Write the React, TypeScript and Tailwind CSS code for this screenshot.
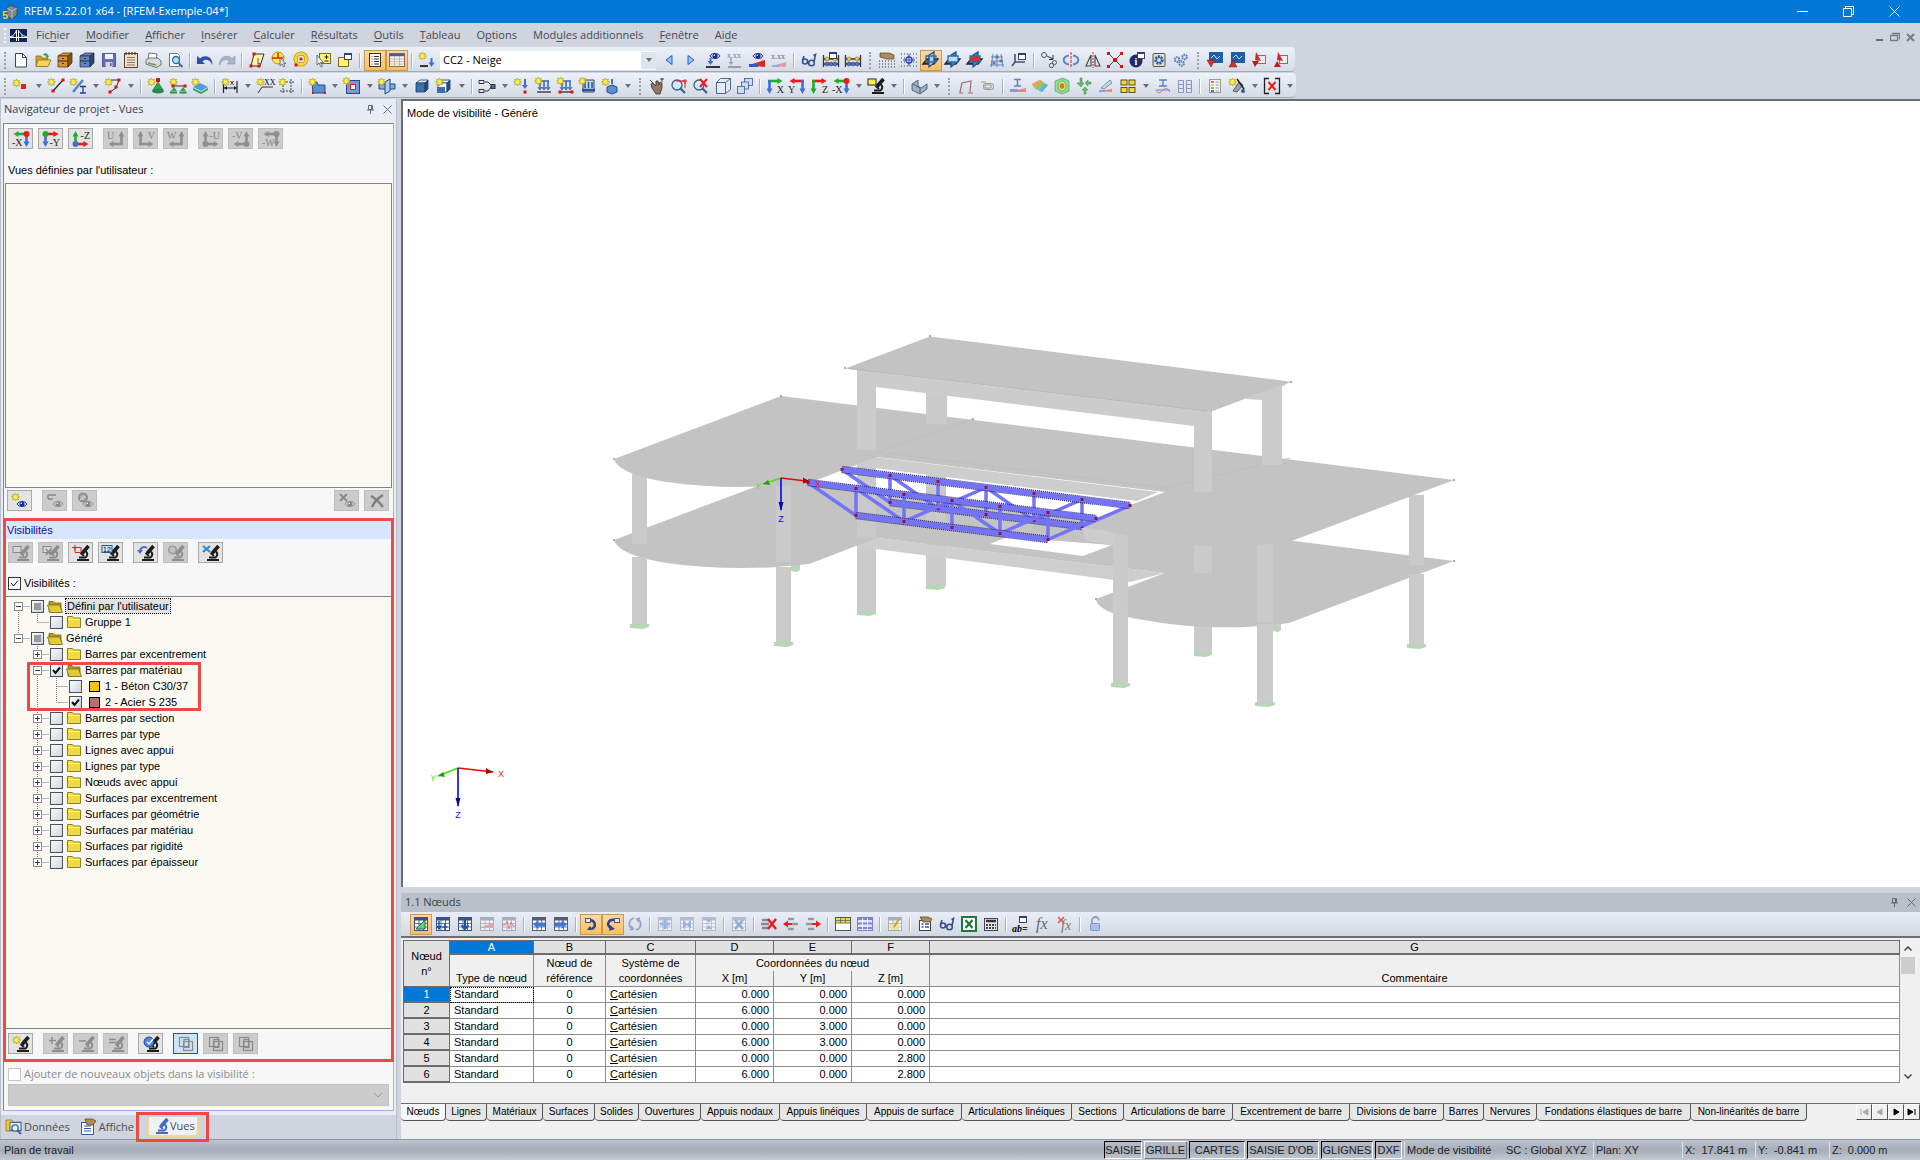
import { useState } from 'react';
import type { ReactNode } from 'react';

/* ---------- small drawing parts shared by the toolbar icons ---------- */

const Star = ({ x = 0, y = 0 }) => (
  <path
    transform={`translate(${x} ${y})`}
    d="M3.5 0l.9 2L6.5 1.2 5.6 3.3 7.5 4 5.6 4.8 6.5 6.8 4.4 6 3.5 8 2.6 6 .5 6.8 1.4 4.8 -.5 4 1.4 3.3.5 1.2 2.6 2z"
    fill="#fff04a"
    stroke="#a3921a"
    strokeWidth=".6"
  />
);

const Dot = ({ x = 0, y = 0, c = '#e01010', s = 3 }) => (
  <rect x={x - s / 2} y={y - s / 2} width={s} height={s} fill={c} />
);

const Scope = ({ c = '#1c1c1c' }) => (
  <g fill="none" stroke={c}>
    <path d="M15.500 1L9 8.500" strokeWidth="3.600" />
    <path d="M7.500 8l3.500 3" strokeWidth="1.800" />
    <path d="M13 6.500c2 2 1.500 5-1 6.500" strokeWidth="2" />
    <path d="M4 15h12M6 12.500h6" strokeWidth="2.200" />
  </g>
);

const Eye = ({ x = 0, y = 0, c = '#1c2a8c' }) => (
  <g transform={`translate(${x} ${y})`}>
    <path d="M0 4C2 .5 8 .5 10 4 8 7.500 2 7.500 0 4z" fill="#c9cfe6" stroke={c} strokeWidth=".9" />
    <circle cx="5" cy="4" r="2.500" fill={c} />
    <circle cx="4.300" cy="3.300" r=".8" fill="#fff" />
  </g>
);

const Window = ({ x = 0, y = 0 }) => (
  <g transform={`translate(${x} ${y})`}>
    <rect x=".5" y=".5" width="7" height="6" fill="#fff" stroke="#444" />
    <path d="M0 1.200h8" stroke="#2b3f86" strokeWidth="1.600" />
  </g>
);

const Sheet = ({ c = '#6c7690' }) => (
  <g>
    <rect x="1.500" y="1.500" width="13" height="13" fill="#fff" stroke={c} />
    <path d="M1 3h14" stroke={c} strokeWidth="3" />
    <path d="M1.500 7.500h13M1.500 11h13M6 3v11.500M10.500 3v11.500" stroke={c} strokeWidth=".8" />
  </g>
);

const Spring = ({ c = '#3d63b5' }) => (
  <g fill="none" stroke={c}>
    <path d="M3 3h10M4 3v8M8 3v8M12 3v8" strokeWidth="1.500" />
    <path d="M2 9l2 3 2-3M6 9l2 3 2-3M10 9l2 3 2-3" />
    <path d="M1 14h14" stroke="#444" strokeWidth="1.500" />
  </g>
);

// Two arrows that leave one corner; the label stands in the opposite one.
const Axes = ({ corner, label, h, v, dot }: { corner: string; label: string; h: string; v: string; dot?: string }) => {
  const right = corner[1] === 'r';
  const bottom = corner[0] === 'b';
  return (
    <g>
      <g transform={`translate(${right ? 17 : -1} ${bottom ? 16 : 0}) scale(${right ? -1 : 1} ${bottom ? -1 : 1})`}>
        <path d="M2 3h10" stroke={h} strokeWidth="2.600" />
        <path d="M11.500 0l5 3-5 3z" fill={h} />
        <path d="M3.500 2v9" stroke={v} strokeWidth="2.600" />
        <path d="M.5 10.500l3 5.500 3-5.500z" fill={v} />
        {dot && <circle cx="3.500" cy="3" r="3" fill={dot} />}
      </g>
      <text
        x={right ? -1 : 17}
        y={bottom ? 8 : 15}
        textAnchor={right ? 'start' : 'end'}
        fontSize="10"
        fontFamily="Liberation Serif, serif"
        fill={h === '#8f8f8f' ? '#858585' : '#222'}
      >
        {label}
      </text>
    </g>
  );
};

const R = '#e81c1c';
const G = '#1fae2c';
const B = '#3f6fd8';
const N = '#8f8f8f';

const Ghost = () => (
  <g fill="none" stroke="#8a8a8a" strokeWidth="1.200">
    <rect x="1.500" y="1.500" width="9" height="9" />
    <rect x="5.500" y="5.500" width="9" height="9" />
    <rect x="6" y="3.500" width="5" height="8" />
  </g>
);

const Glasses = () => (
  <g fill="none" stroke="#34518f" strokeWidth="1.600">
    <circle cx="4" cy="9.500" r="2.500" />
    <circle cx="10.500" cy="11" r="2.800" />
    <path d="M1.500 8.500L3 4M13 10l1.500-7.500-2 1M6.500 9.500l1.500.5" />
  </g>
);

const Abacus = () => (
  <g>
    <path d="M.5 3v12M15.500 3v12M0 7h16M0 12h16" stroke="#333" strokeWidth="1.300" />
    <g fill="#4d76cf" stroke="#1f2f66" strokeWidth=".5">
      <circle cx="4" cy="12" r="2" />
      <circle cx="8" cy="12" r="2" />
      <circle cx="12" cy="12" r="2" />
    </g>
    <circle cx="4" cy="7" r="2" fill="#f0cf3a" stroke="#6d5a10" strokeWidth=".5" />
    <circle cx="12" cy="7" r="2" fill="#f0cf3a" stroke="#6d5a10" strokeWidth=".5" />
  </g>
);

const Planes = ({ a = '#9ed0f5', b = 'none' }) => (
  <g strokeWidth="1.300">
    <path d="M0 12l4-5h11l-4 5z" fill="#d9322d" stroke="#222" />
    <path d="M6 3v12l5-4V0z" fill={a} stroke="#214f92" />
    <path d="M3 4h10v6H3z" fill={b} stroke="#2b6cb3" />
  </g>
);

const Box = ({ c = '#3b6fae' }) => (
  <g stroke="#1f3c66" strokeWidth=".8">
    <path d="M2 5l4-3h8l-3 3z" fill="#e8f1fb" />
    <path d="M2 5h9v9H2z" fill={c} />
    <path d="M11 5l3-3v9l-3 3z" fill="#1f4f86" />
  </g>
);

const Cabinet = ({ c, d }: { c: string; d: string }) => (
  <g stroke="#3a2d12" strokeWidth=".7">
    <path d="M1 4l5-3h9l-4 3z" fill={c} />
    <path d="M1 4h10v11H1z" fill={c} />
    <path d="M11 4l4-3v10l-4 4z" fill={d} />
    <path d="M1 9h10M5 6.500h2M5 11.500h2" fill="none" strokeWidth="1.200" />
  </g>
);

const icons: Record<string, ReactNode> = {
  new: <path d="M2.500 1.500h7l4 4v9.500h-11zM9.500 1.500v4h4" fill="#fff" stroke="#444" />,
  open: (
    <g stroke="#8a6d10" strokeWidth=".8">
      <path d="M1 4h5l1 2h6v8H1z" fill="#c9a227" />
      <path d="M3 8h13l-3 6.500H1z" fill="#f4d55c" />
      <path d="M8 3c2-3 5-2 5 1l1.500-.5-2 2.500-2-2 1.500 0" fill="#2aa32a" stroke="none" />
    </g>
  ),
  blocks: <Cabinet c="#d9932f" d="#8a5412" />,
  blocksBlue: <Cabinet c="#5b83cf" d="#22448c" />,
  save: (
    <g>
      <path d="M1.500 1.500h13v13h-13z" fill="#6b6bb0" stroke="#55558f" />
      <path d="M4 2h8v5H4z" fill="#f3f3f8" />
      <path d="M4.500 10h7v5h-7z" fill="#d4d4e2" />
      <path d="M9 11h1.500v3H9z" fill="#55558f" />
    </g>
  ),
  clipboard: (
    <g>
      <rect x="1.500" y="1.500" width="13" height="14" fill="#efe3cf" stroke="#5e4426" />
      <path d="M4 5.500h8M4 8h8M4 10.500h8M4 13h8" stroke="#8d7757" />
      <path d="M3 0v3M6 0v3M9 0v3M12 0v3" stroke="#5e4426" strokeWidth="1.200" />
    </g>
  ),
  print: (
    <g stroke="#555" strokeWidth=".8">
      <path d="M4 1l8 1-1 6H3z" fill="#fff" />
      <path d="M1 8l3-2h9l3 3v4l-5 2.500L1 12z" fill="#d7dae0" />
      <path d="M3 11l8 2" stroke="#7d9a3a" strokeWidth="1.500" />
    </g>
  ),
  preview: (
    <g>
      <path d="M2.500 1.500h8l2 2v11h-10z" fill="#fff" stroke="#777" />
      <circle cx="9" cy="8" r="3.500" fill="#b5dcf3" stroke="#2f6c99" strokeWidth="1.300" />
      <path d="M11.500 11l4 4" stroke="#2f6c99" strokeWidth="2" />
    </g>
  ),
  undo: <path d="M0 4v8h8L5.500 9.500C8 6.500 13 7 15.500 13 16 5 8 1.500 3 6.500z" fill="#2c4fa8" />,
  redo: <path d="M16 4v8H8l2.500-2.500C8 6.500 3 7 .5 13 0 5 8 1.500 13 6.500z" fill="#a8b4cc" stroke="#7c8aa6" strokeWidth=".5" />,
  cursorRect: (
    <g>
      <path d="M2 14L5 2h10l-4 12z" fill="#fff6a0" stroke="#333" />
      <Dot x={5} y={2} />
      <Dot x={2} y={14} />
      <Dot x={10} y={14} />
      <path d="M9 6v6l1.500-1 1 2" fill="#fff" stroke="#555" />
    </g>
  ),
  cursorCircle: (
    <g>
      <circle cx="7" cy="6" r="6" fill="#ffe55a" stroke="#b08d12" />
      <path d="M7 6H1M7 6V1M7 6h5" stroke={R} strokeWidth="1.500" />
      <path d="M9 6v8l2-2 1.500 3 1.500-1-1.500-2.500h2.500z" fill="#ddd" stroke="#555" strokeWidth=".7" />
    </g>
  ),
  cursorRing: (
    <g>
      <circle cx="8" cy="7" r="5.500" fill="none" stroke="#a07c0c" strokeWidth="4" />
      <circle cx="8" cy="7" r="5.500" fill="none" stroke="#f7d728" strokeWidth="3" />
      <circle cx="8" cy="7" r="2.500" fill="#fff" />
      <Dot x={8} y={7} />
      <Dot x={3} y={13} />
    </g>
  ),
  cursorPlus: (
    <g>
      <rect x="4.500" y="1.500" width="11" height="10" fill="#fff07a" stroke="#776a1b" />
      <path d="M11.500 3v4M9.500 5h4M9.500 9h4" stroke="#222" />
      <path d="M2 3v10l2-2 2 4 1.500-1-2-3.500h3z" fill="#eee" stroke="#444" strokeWidth=".7" />
    </g>
  ),
  yellowWin: (
    <g>
      <path d="M1.500 5.500h10v9h-10z" fill="#fff07a" stroke="#776a1b" />
      <Window x={7} y={1} />
    </g>
  ),
  listPage: (
    <g>
      <rect x="2.500" y="1.500" width="11" height="13" fill="#fff" stroke="#333" />
      <path d="M4.500 4.500h1M4.500 7h1M4.500 9.500h1M4.500 12h1" stroke="#c33" strokeWidth="1.200" />
      <path d="M7 4.500h5M7 7h5M7 9.500h5M7 12h5" stroke="#333" />
    </g>
  ),
  tablePage: (
    <g>
      <rect x=".5" y="1.500" width="15" height="13" fill="#f4f4fb" stroke="#8a6a4a" />
      <path d="M.5 3h15" stroke="#4a5c9c" strokeWidth="2.500" />
      <path d="M5.500 4v10.500M10.500 4v10.500M1 7h14M1 9.500h14M1 12h14" stroke="#b9a48a" strokeWidth=".7" />
    </g>
  ),
  loadCase: (
    <g>
      <Star />
      <path d="M1 14h8" stroke="#333" strokeWidth="2" />
      <path d="M12.500 6v6" stroke={B} strokeWidth="2" />
      <path d="M9.500 10.500h6l-3 4.500z" fill={B} />
    </g>
  ),
  prev: <path d="M11 3.500v9L5 8z" fill="#9cc4f5" stroke="#1f5fc4" />,
  next: <path d="M5 3.500v9L11 8z" fill="#9cc4f5" stroke="#1f5fc4" />,
  eyeLoad: (
    <g>
      <Eye x={5} y={0} />
      <path d="M5.500 6v5" stroke={B} strokeWidth="2" />
      <path d="M2.500 9h6l-3 4z" fill={B} />
      <path d="M1 15h14" stroke="#333" strokeWidth="2" />
    </g>
  ),
  xxLoad: (
    <g>
      <text x="0" y="6" fontSize="8" fontFamily="Liberation Serif, serif" fill="#777">x.xx</text>
      <path d="M4 6v6" stroke="#8da3cf" strokeWidth="1.500" />
      <path d="M1.500 10h5L4 13z" fill="#8da3cf" />
      <path d="M1 15h13" stroke="#888" strokeWidth="1.500" />
    </g>
  ),
  eyeResult: (
    <g>
      <Eye x={4} y={0} />
      <path d="M0 13l16-5v7z" fill="#d92a2a" />
      <path d="M0 12h9v3H0z" fill="#2f57c9" />
    </g>
  ),
  xxResult: (
    <g>
      <text x="0" y="7" fontSize="8" fontFamily="Liberation Serif, serif" fill="#666">x.xx</text>
      <path d="M1 14l14-4v5z" fill="#e69a9a" />
      <path d="M1 13h7v2H1z" fill="#94a6e0" />
    </g>
  ),
  glasses: <Glasses />,
  abacusWin: <g><Abacus /><Window x={6} y={0} /></g>,
  abacus: <Abacus />,
  handGrid: (
    <g>
      <path d="M0 9h16M0 12h16M0 15h16" stroke="#333" strokeDasharray="1 2" />
      <path d="M1 1h9l5 2v4H8L1 5z" fill="#b38a5c" stroke="#553c20" strokeWidth=".7" />
    </g>
  ),
  gridSnap: (
    <g>
      <path d="M0 2h16M0 6h16M0 10h16M0 14h16" stroke="#444" strokeDasharray="1 2" />
      <circle cx="8" cy="8" r="3" fill="#fff" stroke="#2440a8" strokeWidth="1.300" />
      <path d="M8 2v12M2 8h12" stroke="#2440a8" />
    </g>
  ),
  planeA: <Planes a="#9ed0f5" />,
  planeB: <Planes a="#4b86c8" b="#bcdcf6" />,
  planeC: <Planes a="#4b86c8" b="#e62a22" />,
  guides: (
    <g fill="none" stroke="#5b86bb">
      <path d="M4 2L2 15M8 2v13M12 2l2 13M2 5h12M2 9h12M1 13h14" />
      <Dot x={8} y={5} s={2} />
      <Dot x={12} y={9} s={2} />
      <Dot x={5} y={11} s={2} />
    </g>
  ),
  axisWin: (
    <g>
      <path d="M4 2v8l-3 4M4 10h10" stroke="#3c5678" strokeWidth="1.600" fill="none" />
      <Window x={7} y={1} />
    </g>
  ),
  moveCopy: (
    <g fill="none" stroke="#555">
      <circle cx="3" cy="3" r="2.500" />
      <circle cx="10.500" cy="13.500" r="2.200" />
      <circle cx="13.500" cy="10.500" r="2" />
      <path d="M6 4l6 3M12 3v4.500H8" stroke="#333" />
    </g>
  ),
  rotate: (
    <g fill="none">
      <path d="M6 3.500C-1 5-1 11 6 12.500M10 3.500c7 1.500 7 7.500 0 9" stroke="#5a86cc" strokeWidth="2" />
      <path d="M8 0v16" stroke={R} strokeDasharray="3 1" />
    </g>
  ),
  mirror: (
    <g fill="none">
      <path d="M6 3v11H1zM10 3v11h5z" stroke="#444" strokeWidth="1.100" />
      <path d="M8 0v16" stroke={R} strokeDasharray="2 1" />
    </g>
  ),
  cross: (
    <g>
      <path d="M2 2l12 12M14 2L2 14" stroke="#444" />
      <Dot x={1.5} y={1.5} />
      <Dot x={14.5} y={1.5} />
      <Dot x={1.5} y={14.5} />
      <Dot x={14.5} y={14.5} />
      <Dot x={8} y={8} s={4} />
    </g>
  ),
  info: (
    <g>
      <circle cx="7" cy="9" r="6.500" fill="#1f2a6b" />
      <text x="7" y="13" fontSize="10" fontWeight="bold" textAnchor="middle" fontFamily="Liberation Serif, serif" fill="#fff">i</text>
      <Window x={8} y={0} />
    </g>
  ),
  gearBox: (
    <g>
      <rect x="2" y="1.500" width="12" height="13" rx="1" fill="#e3e0cf" stroke="#555" />
      <circle cx="8" cy="8" r="3.500" fill="none" stroke="#2d5aa8" strokeWidth="2.500" strokeDasharray="2 1" />
      <circle cx="8" cy="8" r="2.500" fill="none" stroke="#2d5aa8" />
    </g>
  ),
  gears: (
    <g fill="none" stroke="#5079bf" strokeWidth="2" strokeDasharray="1.500 .7">
      <circle cx="4" cy="7.500" r="2.300" />
      <circle cx="11.500" cy="5" r="2.300" />
      <circle cx="8.500" cy="11.500" r="2.300" />
    </g>
  ),
  modDown: <g><rect x="2" y="0" width="14" height="11" fill="#1f5fa6" /><path d="M4 6l3-3 3 4 3-3" stroke="#bfe0ff" fill="none" /><path d="M0 8h8l-4 7z" fill="#d8322c" stroke="#7d1410" strokeWidth=".5" /></g>,
  modUp: <g><rect x="2" y="0" width="14" height="11" fill="#1f5fa6" /><path d="M4 6l3-3 3 4 3-3" stroke="#bfe0ff" fill="none" /><path d="M0 15h8L4 8z" fill="#d8322c" stroke="#7d1410" strokeWidth=".5" /></g>,
  redDown: <g><rect x="6.500" y="3.500" width="8" height="8" fill="#eee" stroke="#777" /><path d="M5 0l5 9-6-1z" fill={R} /><path d="M1 9h7l-4 6z" fill="#c11818" /></g>,
  redUp: <g><rect x="6.500" y="3.500" width="8" height="8" fill="#eee" stroke="#777" /><path d="M5 0l5 9-6-1z" fill={R} /><path d="M1 15h7L4 9z" fill="#c11818" /></g>,

  node: <g><Star x={0} y={1} /><rect x="8" y="6" width="5" height="5" fill={R} /></g>,
  line: <g><Star /><path d="M5 13L15 2" stroke="#222" strokeWidth="1.200" /><Dot x={15} y={2} /><Dot x={5} y={13} /></g>,
  member: <g><Star /><path d="M3 14L13 2" stroke="#4f86cf" strokeWidth="2.500" /><path d="M10 8.500h6M10 15h6M13 8.500v6.500" stroke="#1f3fa0" strokeWidth="1.300" /></g>,
  polyline: <g><path d="M6 2h8l-3 8-6 4" stroke="#333" fill="none" /><Star x={0} y={0} /><Dot x={14} y={2} /><Dot x={11} y={9} /><Dot x={5} y={14} /></g>,
  support: <g><Star /><Dot x={10} y={2} s={4} /><path d="M10 4l5 8H5z" fill="#2ea84f" stroke="#176b2e" strokeWidth=".7" /><ellipse cx="10" cy="13" rx="6" ry="2.500" fill="#2c8a46" /></g>,
  lineSupport: <g><Star /><path d="M3 8h12" stroke="#333" /><Dot x={3} y={8} /><Dot x={15} y={8} /><path d="M4 9l3 4H1zM13 9l3 4h-6z" fill="#2ea84f" /><path d="M0 14.500h7M9.500 14.500h7" stroke="#2c8a46" strokeWidth="2" /></g>,
  surfSupport: <g><path d="M1 9l7-4 8 4-7 4z" fill="#4f9be0" /><path d="M1 10l8 4 7-4v2l-7 4-8-4z" fill="#2ea84f" /><Star x={0} y={0} /></g>,
  dim: <g><path d="M1.500 3v12M15 3v12M2 10h12" stroke="#222" strokeWidth="1.200" /><path d="M2 10l3-2v4zM15 10l-3-2v4z" fill="#222" /><text x="8" y="7" fontSize="8" fontFamily="Liberation Sans, sans-serif">x</text><Star x={0} y={0} /></g>,
  comment: <g><path d="M1 15l4-6h11" stroke="#333" fill="none" /><text x="7" y="7" fontSize="8" fontFamily="Liberation Serif, serif">XX</text><Star /></g>,
  guideFrame: <g><path d="M4 1v15M12 1v15M1 4h15M1 13h15" stroke="#444" strokeDasharray="2 1" /><Star /></g>,
  surface: <g><path d="M3 5l5-1 1 3h7v8H4z" fill="#5a8fd0" stroke="#224b86" /><Star /><Dot x={4} y={15} s={2} /><Dot x={16} y={15} s={2} /></g>,
  opening: <g><rect x="2.500" y="2.500" width="13" height="13" fill="#6f9fd6" stroke="#224b86" /><rect x="6.500" y="6.500" width="5" height="5" fill="#fff" stroke={R} /><Star x={-1} y={-1} /></g>,
  intersect: <g><path d="M0 6h16v5H0z" fill="#7fb0dc" stroke="#224b86" /><path d="M6 4l5-3v12l-5 3z" fill="#a9cdee" stroke="#224b86" /><Star x={-1} /></g>,
  solid: <Box />,
  solidNew: <g><Box c="#fff" /><path d="M1 9h8v6H1z" fill="#3b6fae" /><Star /></g>,
  release: <g fill="none" stroke="#333"><path d="M0 2.500h5v3H0zM0 11.500h5v3H0zM6 4h3l4 4-4 5H6" /><Dot x={14} y={8.500} c="#2f6fc0" s={4} /></g>,
  nodeLoad: <g><Star x={0} y={0} /><path d="M11 1v8" stroke={B} strokeWidth="2" /><path d="M8 7h6l-3 4z" fill={B} /><Dot x={11} y={14} /></g>,
  lineLoad: <g><Spring /><Star x={-1} y={-1} /></g>,
  memberLoad: <g><Spring /><Star x={-1} y={-1} /><Dot x={2} y={14} /><Dot x={14} y={14} /></g>,
  surfLoad: <g><path d="M3 2h11v12H3z" fill="#c5d8ee" stroke="#444" /><path d="M5 4v6M8.500 4v6M12 4v6" stroke="#25539c" strokeWidth="1.500" /><path d="M2 12h13" stroke="#25539c" strokeWidth="2.500" /><Star x={-1} y={-1} /></g>,
  solidLoad: <g><path d="M5 9l5-2 5 2v5l-5 2-5-2z" fill="#5f90cc" stroke="#224b86" /><path d="M10 1v5" stroke={B} strokeWidth="2" /><Star /></g>,

  hand: <g fill="#8c7b62" stroke="#3b3122" strokeWidth=".8"><path d="M2 6l2-1 3 3V3l2 0 1 4 1-3 2 1v5l-2 6H7L3 10z" /><path d="M11 1h4M13 0v4M1 2l3 3" fill="none" stroke="#222" /></g>,
  zoomWin: <g><circle cx="6" cy="7" r="5" fill="#d3e9f7" stroke="#35618f" strokeWidth="1.300" /><path d="M9 10l5 5" stroke="#35618f" strokeWidth="2.200" /><path d="M5 3h9v7M14 1v5M11 3h5" stroke={R} fill="none" /></g>,
  zoomDel: <g><circle cx="6" cy="7" r="5" fill="#d3e9f7" stroke="#35618f" strokeWidth="1.300" /><path d="M9 10l5 5" stroke="#35618f" strokeWidth="2.200" /><path d="M7 1l7 8M14 1L7 9" stroke={R} strokeWidth="2" /></g>,
  cube: <path d="M1.500 4.500h9v11h-9zM1.500 4.500l4-4h10l-5 4M15.500 .5v11l-5 4" fill="#e6eefb" fillOpacity=".6" stroke="#4d6796" />,
  cubes: <g fill="#cfdcf2" stroke="#4d6796" strokeWidth=".9"><rect x="7.500" y=".5" width="8" height="7" /><rect x="4.500" y="4" width="7" height="7" /><rect x=".5" y="8.500" width="7" height="7" /></g>,
  vX: <Axes corner="tl" label="X" h={G} v={B} />,
  vY: <Axes corner="tr" label="Y" h={R} v={B} />,
  vZ: <Axes corner="tl" label="Z" h={R} v={G} />,
  vmX: <Axes corner="tr" label="-X" h={G} v={B} dot={R} />,
  vmY: <Axes corner="tl" label="-Y" h={R} v={B} dot={G} />,
  vmZ: <Axes corner="bl" label="-Z" h={R} v={G} dot={B} />,
  gU: <Axes corner="br" label="U" h={N} v={N} />,
  gV: <Axes corner="bl" label="V" h={N} v={N} />,
  gW: <Axes corner="br" label="W" h={N} v={N} />,
  gmU: <Axes corner="bl" label="-U" h={N} v={N} dot={N} />,
  gmV: <Axes corner="br" label="-V" h={N} v={N} dot={N} />,
  gmW: <Axes corner="tr" label="-W" h={N} v={N} dot={N} />,
  scopeYellow: <g><Scope /><rect x="0" y="1" width="8" height="6" fill="#fff04a" stroke="#222" /></g>,
  shape: <g stroke="#3f4c5c" strokeWidth=".8"><path d="M1 6l6-4v6l3 2 6-4v5l-7 5-8-4z" fill="#9eb2c4" /><path d="M2 6l7 4v5" fill="none" /></g>,
  deform: <path d="M2 14l2-9 9-2-1 11M1 15h4M10 15h5" stroke="#9a6b6b" fill="none" strokeWidth="1.200" />,
  capsule: <g stroke="#999"><rect x="3.500" y="5.500" width="10" height="6" rx="2" fill="#ddd" /><path d="M1 4h5M5 7h6v3H5z" fill="#f3efd8" /></g>,
  iDiag: <g><path d="M4 1.500h7M4 8h7M7.500 2v6" stroke="#5b84bb" strokeWidth="1.500" /><path d="M0 14l16-4v4z" fill="#e48484" /><path d="M0 11h8v3H0z" fill="#8b97e0" /></g>,
  rainbow: <g><path d="M0 6l8-4 8 5-6 7-7-3z" fill="#7bd07b" /><path d="M0 6l8-4 3 2-8 6z" fill="#f0a05a" /><path d="M10 14l6-7-3-1-6 7z" fill="#6aa8ea" /></g>,
  rainbowCube: <g stroke="#4b8a76" strokeWidth=".6"><path d="M1 3l8-3 6 3v10l-7 3-7-3z" fill="#8ce08c" /><ellipse cx="8" cy="8" rx="4" ry="5" fill="#f7e04d" /><ellipse cx="8" cy="8" rx="2" ry="2.500" fill="#ef6a3c" /></g>,
  reactions: <g fill="#5fbf6b" stroke="#3a8a45" strokeWidth=".5"><path d="M4 0v5H1l4 4 3-4H6V0zM15 4h-3V2L9 5l3 3V6h3zM10 16v-4h2l-3-3-3 3h2v4z" /></g>,
  sectionRes: <g><path d="M3 10L12 2l2 3-8 6z" fill="#c5d6ea" stroke="#7d90a8" /><path d="M1 13l13-2v3z" fill="#e48484" /><path d="M1 12h6v2H1z" fill="#8b97e0" /></g>,
  fourBlocks: <g fill="#f0d838" stroke="#4d430c" strokeWidth=".9"><rect x="1" y="2" width="6" height="5" /><rect x="9" y="2" width="6" height="5" /><rect x="1" y="9.500" width="6" height="5" /><rect x="9" y="9.500" width="6" height="5" /></g>,
  iWave: <g fill="none"><path d="M4 2h8M4 8h8M8 2v6" stroke="#5b84bb" strokeWidth="1.400" /><path d="M1 12c3 5 5 2 7 0s5-2 7 2" stroke="#d86b6b" /><path d="M1 12h14" stroke="#6c7fe0" /></g>,
  cells: <path d="M1.500 2.500h5v4h-5zM9.500 2.500h5v4h-5zM1.500 6.500h5v4h-5zM9.500 6.500h5v4h-5zM1.500 10.500h5v4h-5zM9.500 10.500h5v4h-5z" fill="#e0e6f8" stroke="#8a94c0" />,
  panel: <g><rect x="2.500" y="1.500" width="11" height="13" fill="#f6f6f6" stroke="#999" /><path d="M4 4h3" stroke="#e66" strokeWidth="2" /><path d="M4 7h3" stroke="#ec5" strokeWidth="2" /><path d="M4 10h3" stroke="#6c6" strokeWidth="2" /><path d="M4 13h3" stroke="#66d" strokeWidth="2" /><path d="M8.500 4H12M8.500 7H12M8.500 10H12M8.500 13H12" stroke="#999" /></g>,
  tapeStar: <g><path d="M4 13l6-9 4 3-6 7z" fill="#9aa0a8" stroke="#444" strokeWidth=".8" /><path d="M8 1l7 10" stroke="#222" strokeWidth="1.500" /><Star /><circle cx="14" cy="13" r="2" fill="#2f57a8" /></g>,
  cancelBox: <g fill="none"><path d="M5 .5H.5v15H5M11 .5h4.500v15H11" stroke="#222" strokeWidth="1.300" /><path d="M4.500 4l7 8M11.500 4l-7 8" stroke={R} strokeWidth="2" /></g>,

  tEdit: <g><Sheet c="#39528c" /><path d="M3 13L12 4v9z" fill="#5fd07a" stroke="#1b7a33" /></g>,
  tPlus: <g><Sheet c="#39528c" /><path d="M4 5v8M2 10l2 3 2-3M10 8v6M7.500 11h5" stroke="#224ca8" strokeWidth="1.500" fill="none" /></g>,
  tDown: <g><Sheet c="#39528c" /><path d="M8 4v8M4.500 9L8 13l3.500-4" stroke="#224ca8" strokeWidth="2" fill="none" /></g>,
  tDiag: <g opacity=".5"><Sheet /><path d="M1 12l14-6v6z" fill="#e06a6a" /></g>,
  tWave: <g opacity=".5"><Sheet /><path d="M1 9h3l2-4 2 8 2-7 2 4h3" fill="none" stroke={R} /></g>,
  tLeft: <g><Sheet c="#555d70" /><path d="M14 6.500v4H7.500V13L2 8.500 7.500 4v2.500z" fill="#3f78d8" /></g>,
  tRight: <g><Sheet c="#555d70" /><path d="M2 6.500v4h6.500V13L14 8.500 8.500 4v2.500z" fill="#3f78d8" /></g>,
  tFrom: <g fill="none"><path d="M6 4c6 0 8 6 3 9" stroke="#24439a" strokeWidth="2.500" /><path d="M4 14l3-4 3 4z" fill="#24439a" /><rect x="2.500" y="2.500" width="5" height="4" fill="#dfe6f4" stroke="#555" /></g>,
  tTo: <g fill="none"><path d="M10 4C3 3 1 9 6 12" stroke="#24439a" strokeWidth="2.500" /><path d="M5 9l5 4-6 2z" fill="#24439a" /><rect x="9.500" y="2.500" width="5" height="4" fill="#dfe6f4" stroke="#555" /></g>,
  tSync: <path d="M7 2C1 4 1 11 6 13M9 14c6-2 6-9 1-11M4 10l2 3-3 1M12 6l-2-3 3-1" fill="none" stroke="#8fa3c8" strokeWidth="1.800" />,
  tAdd: <g opacity=".6"><Sheet c="#9aa0ad" /><path d="M6.500 3h3v3.500H13v3H9.500V13h-3V9.500H3v-3h3.500z" fill="#6c93e6" /></g>,
  tSwap: <g opacity=".6"><Sheet c="#9aa0ad" /><path d="M4 4l4 4 4-4v9L8 9l-4 4z" fill="#6c93e6" /></g>,
  tSplit: <g opacity=".6"><Sheet c="#9aa0ad" /><path d="M5 3h6L8 7zM5 13h6L8 9z" fill="#6c93e6" /></g>,
  tX: <g opacity=".6"><Sheet c="#9aa0ad" /><path d="M4 4l8 9M12 4l-8 9" stroke="#5f82c8" strokeWidth="2.500" /></g>,
  rowDel: <g><path d="M1 4h7M0 8h8M1 12h7" stroke="#888" strokeWidth="2.500" /><path d="M7 3l8 10M15 3L7 13" stroke={R} strokeWidth="2.500" /></g>,
  rowIn: <g><path d="M5 3h6M9 8h6M5 13h6" stroke="#999" strokeWidth="2.500" /><path d="M9 8H4" stroke={R} strokeWidth="2" /><path d="M5 4.500v7L0 8z" fill={R} /></g>,
  rowOut: <g><path d="M3 3h6M1 8h6M3 13h6" stroke="#999" strokeWidth="2.500" /><path d="M7 8h5" stroke={R} strokeWidth="2" /><path d="M11 4.500v7L16 8z" fill={R} /></g>,
  tYellow: <g><rect x=".5" y="1.500" width="15" height="13" fill="#fff" stroke="#555" /><path d="M1 2h14v5H1z" fill="#e8de45" /><path d="M5.500 2v5M10.500 2v5M1 7h14M1 4.500h14" stroke="#555" strokeWidth=".7" /></g>,
  tBlue: <g><rect x=".5" y="1.500" width="15" height="13" fill="#dfe2fa" stroke="#7a82c8" /><path d="M1 3h14M1 7.500h14M1 12h14" stroke="#7d86d6" strokeWidth="2.200" /><path d="M5.500 2v12.500M10.500 2v12.500" stroke="#fff" strokeWidth=".8" /></g>,
  tPencil: <g opacity=".8"><Sheet c="#9aa0ad" /><path d="M3 8h9v6H3z" fill="#efe48a" /><path d="M7 11l5-8" stroke="#c98f2b" strokeWidth="2" /></g>,
  handSheet: <g><rect x="2.500" y="4.500" width="11" height="10" fill="#fff" stroke="#444" /><path d="M4.500 8h2M4.500 11h2M8 8h4M8 11h4" stroke="#2f57a8" strokeWidth="1.300" /><path d="M3 1h8l4 2-2 3H6z" fill="#b38a5c" stroke="#553c20" strokeWidth=".7" /></g>,
  excel: <g><rect x="1" y="1" width="14" height="14" fill="#fff" stroke="#1c7a3a" strokeWidth="2" /><path d="M4.500 4l7 8M11.500 4l-7 8" stroke="#1c7a3a" strokeWidth="2.200" /></g>,
  calc: <g><rect x="1.500" y="2.500" width="13" height="12" fill="#e4e4ec" stroke="#444" /><path d="M3 5h10" stroke="#333" strokeWidth="2.500" /><path d="M3 9h10M3 12h10" stroke="#444" strokeWidth="1.800" strokeDasharray="2 1" /></g>,
  ab: <g><Window x={6} y={0} /><text x="-1" y="16" fontSize="10" fontStyle="italic" fontWeight="bold" fontFamily="Liberation Serif, serif">ab=</text></g>,
  fx: <text x="1" y="13" fontSize="16" fontStyle="italic" fontFamily="Liberation Serif, serif" fill="#666">fx</text>,
  fxDel: <g><text x="4" y="14" fontSize="14" fontStyle="italic" fontFamily="Liberation Serif, serif" fill="#777">fx</text><path d="M1 1l6 6M7 1L1 7" stroke="#e05050" strokeWidth="1.500" /></g>,
  lock: <g><path d="M5 8V4.500a3.500 3.500 0 0 1 7 0" fill="none" stroke="#8c9cc4" strokeWidth="1.800" /><rect x="3.500" y="7.500" width="9" height="7" rx="1" fill="#a9c0ec" stroke="#7f92c0" /></g>,

  eyeNew: <g><Eye x={5} y={7} /><Star /></g>,
  eyeList: <g><Eye x={6} y={7} c="#888" /><path d="M1 2h8M1 6h5M1 2v4" stroke="#888" strokeWidth="1.500" fill="none" /></g>,
  eyeBack: <g><Eye x={6} y={7} c="#888" /><circle cx="6" cy="4.500" r="4" stroke="#8d8d8d" strokeWidth="2" fill="#b5b5b5" /><path d="M3 7l5-4" stroke="#ddd" /></g>,
  eyeDel: <g><Eye x={6} y={7} c="#888" /><path d="M1 1l7 7M8 1L1 8" stroke="#888" strokeWidth="1.800" /></g>,
  del: <path d="M2 3c4 2 8 6 12 11M14 2C9 5 5 9 3 14" stroke="#7d7d7d" strokeWidth="2.400" fill="none" />,
  sGrey: <g><Scope c="#8d8d8d" /><rect x="0" y="1.500" width="8" height="6" fill="#d6d6d6" stroke="#888" /></g>,
  sGreyX: <g><Scope c="#8d8d8d" /><rect x="0" y="1.500" width="8" height="6" fill="#d6d6d6" stroke="#888" /><path d="M3 4l5 6M8 4l-5 6" stroke="#888" strokeWidth="1.500" /></g>,
  sRed: <g><Scope /><path d="M2 2.500h6v5H2zM-1 2.500h5M2 0v5" fill="none" stroke={R} /></g>,
  sNum: <g><Scope /><rect x="-1" y=".5" width="10" height="7" fill="#cfe8ff" stroke="#1f5a9c" /><text x="4" y="7" fontSize="7" textAnchor="middle" fontFamily="Liberation Sans, sans-serif">12</text></g>,
  sBack: <g><Scope /><path d="M2 7c0-5 4-6 7-4" stroke="#4a6cd0" strokeWidth="2" fill="none" /><path d="M-1 5l6 0-3 4z" fill="#4a6cd0" /></g>,
  sGreyGo: <g><Scope c="#8d8d8d" /><circle cx="4.500" cy="5" r="3.800" fill="#c2c2c2" stroke="#999" strokeWidth="1.500" /></g>,
  sCross: <g><Scope /><path d="M0 1l7 6M7 1L0 7" stroke="#1f8fe0" strokeWidth="2.200" /></g>,
  sNew: <g><Scope /><Star x={0} y={0} /></g>,
  sPlusG: <g><Scope c="#8d8d8d" /><path d="M4 1v7M1 4.500h7" stroke="#8d8d8d" strokeWidth="1.500" /></g>,
  sMinusG: <g><Scope c="#8d8d8d" /><path d="M1 5h7" stroke="#8d8d8d" strokeWidth="1.500" /></g>,
  sEqG: <g><Scope c="#8d8d8d" /><path d="M1 3.500h7M1 6.500h7" stroke="#8d8d8d" strokeWidth="1.500" /></g>,
  sBall: <g><Scope /><circle cx="6" cy="6" r="5" fill="#4f86e0" stroke="#1d3f8f" /><path d="M4 6l2 2 4-5" stroke="#fff" strokeWidth="1.500" fill="none" /></g>,
  ghost: <Ghost />,
  tabData: <g><path d="M0 1h6l1 2h8v9H0z" fill="#f0c63a" stroke="#94731a" strokeWidth=".8" /><rect x="4" y="3.500" width="11" height="8" fill="#dbe9fb" stroke="#3a66ad" /><circle cx="9" cy="9" r="3.200" fill="#eaf5ff" stroke="#3a66ad" strokeWidth="1.300" /><path d="M11 11l4 4" stroke="#3a66ad" strokeWidth="2" /></g>,
  tabShow: <g><rect x="1.500" y="3.500" width="12" height="12" fill="#fff" stroke="#2f5fae" /><path d="M4 7h7M4 9.500h7M4 12h7" stroke="#2f5fae" /><path d="M5 0h7l4 2-3 4H7z" fill="#b38a5c" stroke="#553c20" strokeWidth=".7" /></g>,
  tabView: <Scope c="#3f6bc4" />,
};

const Icon = ({ name }: { name: string }) => (
  <svg viewBox="0 0 16 16" className="h-4 w-4 shrink-0 overflow-visible" aria-hidden="true">
    {icons[name]}
  </svg>
);

/* ---------- toolbars ---------- */

// '|' separator, 'v' drop-down arrow, ':' grip, a trailing '*' marks a pressed button
const Tools = ({ items }: { items: string }) => (
  <>
    {items.split(' ').map((item, i) => {
      if (item === '|') return <span key={i} className="mx-[3px] h-[15px] w-[2px] shrink-0 border-r border-white bg-[#a9b0bd]" />;
      if (item === ':') return <span key={i} className="mx-[5px] h-[17px] w-[2px] shrink-0 border-l-2 border-dotted border-[#9aa0ab]" />;
      if (item === 'v')
        return (
          <button key={i} aria-label="Plus d'options" className="flex w-[13px] shrink-0 justify-center">
            <svg viewBox="0 0 6 4" className="h-1 w-1.5"><path d="M0 0h6L3 4z" fill="#6b7078" /></svg>
          </button>
        );
      const on = item.endsWith('*');
      const name = on ? item.slice(0, -1) : item;
      return (
        <button
          key={i}
          aria-label={name}
          className={`flex h-[21px] w-[22px] shrink-0 items-center justify-center ${on ? 'border border-[#c29b5a] bg-gradient-to-b from-[#fbd9a2] to-[#ffbe5c]' : ''}`}
        >
          <Icon name={name} />
        </button>
      );
    })}
  </>
);

const bar = 'flex h-[25px] items-center rounded-r border-b border-[#a5a9b0] bg-gradient-to-b from-[#edf1fa] to-[#d5dbe6] pt-[2px]';

const menus = ['Fic&hier', '&Modifier', '&Afficher', '&Insérer', '&Calculer', '&Résultats', '&Outils', '&Tableau', 'O&ptions', 'Mod&ules additionnels', '&Fenêtre', 'Ai&de'];

const MenuLabel = ({ text }: { text: string }) => {
  const [before, after] = text.split('&');
  return (
    <>
      {before}
      <span className="underline underline-offset-2">{after[0]}</span>
      {after.slice(1)}
    </>
  );
};

/* ---------- project navigator ---------- */

const ToolButton = ({ name, kind }: { name: string; kind?: string }) => (
  <button
    aria-label={name}
    disabled={kind === 'off'}
    className={`flex h-[21px] w-[25px] items-center justify-center border ${
      kind === 'off' ? 'border-[#bdbdbd] bg-[#cccccc]' : kind === 'on' ? 'border-[#1c5a94] bg-[#cce4f7]' : 'border-[#a8a8a8] bg-[#e3e3e3]'
    }`}
  >
    <Icon name={name} />
  </button>
);

const CheckBox = ({ id, state, small }: { id: string; state?: string; small?: boolean }) => {
  const [on, setOn] = useState(state === 'on');
  return (
    <span className="grid shrink-0 place-items-center [&>*]:col-start-1 [&>*]:row-start-1">
      <input
        id={id}
        type="checkbox"
        checked={on}
        onChange={() => setOn(!on)}
        className={`h-[13px] w-[13px] appearance-none border ${
          small ? 'border-[#c4c4c4] bg-white' : id === 'vis' ? 'border-[#333] bg-white' : 'border-[#4a4f58] bg-gradient-to-br from-[#fafbfd] to-[#ccd4e2]'
        }`}
      />
      {on && (
        <svg viewBox="0 0 13 13" className="pointer-events-none h-[13px] w-[13px]">
          <path d="M3 6l2.500 3L10 3.500" fill="none" stroke="#111" strokeWidth={id === 'vis' ? 1 : 2} />
        </svg>
      )}
      {state === 'mixed' && <span className="pointer-events-none h-[7px] w-[7px] bg-[#9a9a9a]" />}
    </span>
  );
};

const Folder = ({ open }: { open?: boolean }) =>
  open ? (
    <svg viewBox="0 0 16 13" className="h-[13px] w-4 shrink-0">
      <path d="M2 1.500h4l1.500 1.500H14v9H2z" fill="#b39a1c" stroke="#6e5e10" strokeWidth=".8" />
      <path d="M.5 5h12l3 7.500H3z" fill="#e3c938" stroke="#7a6912" strokeWidth=".8" />
    </svg>
  ) : (
    <svg viewBox="0 0 14 12" className="h-3 w-3.5 shrink-0">
      <path d="M.5 .5h5L7 2h6.500v9.500H.5z" fill="#f2d84a" stroke="#94811c" />
      <path d="M1 3.500h12" stroke="#fff3a8" />
    </svg>
  );

// one column of the dotted tree lines: e/E/- open node, +/P closed node, | T L plain lines
const Guide = ({ kind }: { kind: string }) => {
  if (kind === ' ') return <span className="w-[19px] shrink-0" />;
  const top = kind === 'e' ? 8 : 0;
  const end = 'ELP'.includes(kind) ? 8 : 16;
  const node = 'eE-+P'.includes(kind);
  return (
    <svg viewBox="0 0 19 16" className="h-4 w-[19px] shrink-0 overflow-visible">
      <path d={`M9.500 ${top}V${end}${kind === '|' ? '' : 'M9.500 8.500H21'}`} stroke="#777" strokeDasharray="1 1" fill="none" />
      {node && <rect x="5.500" y="4.500" width="8" height="8" fill="#fff" stroke="#8a8a8a" />}
      {node && <path d={`M7 8.500h5${'+P'.includes(kind) ? 'M9.500 6v5' : ''}`} stroke="#26408c" />}
    </svg>
  );
};

type Row = { guides: string; label: string; state?: string; open?: boolean; swatch?: string };

const rowsTop: Row[] = [
  { guides: 'e', label: "Défini par l'utilisateur", state: 'mixed', open: true },
  { guides: '|L', label: 'Gruppe 1' },
  { guides: 'E', label: 'Généré', state: 'mixed', open: true },
  { guides: ' +', label: 'Barres par excentrement' },
];

const rowsMaterial: Row[] = [
  { guides: ' -', label: 'Barres par matériau', state: 'on', open: true },
  { guides: ' |T', label: '1 - Béton C30/37', swatch: 'bg-[#f5c400]' },
  { guides: ' |L', label: '2 - Acier S 235', state: 'on', swatch: 'bg-[#b96e6e]' },
];

const rowsRest: Row[] = [
  { guides: ' +', label: 'Barres par section' },
  { guides: ' +', label: 'Barres par type' },
  { guides: ' +', label: 'Lignes avec appui' },
  { guides: ' +', label: 'Lignes par type' },
  { guides: ' +', label: 'Nœuds avec appui' },
  { guides: ' +', label: 'Surfaces par excentrement' },
  { guides: ' +', label: 'Surfaces par géométrie' },
  { guides: ' +', label: 'Surfaces par matériau' },
  { guides: ' +', label: 'Surfaces par rigidité' },
  { guides: ' P', label: 'Surfaces par épaisseur' },
];

const TreeRow = ({ row }: { row: Row }) => {
  const id = row.label.replace(/[^a-zA-Z0-9]/g, '-');
  const first = row.guides === 'e';
  return (
    <div className="flex h-4 items-center pl-[3px]">
      {row.guides.split('').map((g, i) => <Guide key={i} kind={g} />)}
      <span className="w-[3px]" />
      <CheckBox id={id} state={row.state} />
      <span className={`flex ${row.swatch ? 'w-[22px] pl-[7px]' : 'w-[21px] justify-center'}`}>
        {row.swatch ? <span className={`h-[11px] w-[11px] border border-black ${row.swatch}`} /> : <Folder open={row.open} />}
      </span>
      <label htmlFor={id} className={`whitespace-nowrap px-px leading-[14px] ${first ? 'border border-dotted border-black bg-[#e2e2e2]' : ''}`}>
        {row.label}
      </label>
    </div>
  );
};

const Navigator = () => (
  <aside className="flex w-[397px] shrink-0 flex-col border-x border-[#b9bec8] bg-[#e8ecf5]">
    <div className="flex h-6 items-center pb-1 pl-[3px] pr-1 font-['Open_Sans',sans-serif] text-[11px] text-[#3c3f45]">
      <h2>Navigateur de projet - Vues</h2>
      <button aria-label="Épingler" className="ml-auto mr-2"><Pin /></button>
      <button aria-label="Fermer"><Cross /></button>
    </div>

    <div className="ml-[2px] mr-[2px] flex min-h-0 flex-1 flex-col border border-b-[#a9a9e8] border-l-[#80848c] border-r-[#a9a9e8] border-t-[#80848c] bg-[#f7f7f7]">
      <div className="flex flex-col px-px">
        <div className="flex gap-2.5 pl-[3px] pt-1">
          <div className="flex gap-[5px]"><ToolButton name="vmX" /><ToolButton name="vmY" /><ToolButton name="vmZ" /></div>
          <div className="flex gap-[5px]"><ToolButton name="gU" kind="off" /><ToolButton name="gV" kind="off" /><ToolButton name="gW" kind="off" /></div>
          <div className="flex gap-[5px]"><ToolButton name="gmU" kind="off" /><ToolButton name="gmV" kind="off" /><ToolButton name="gmW" kind="off" /></div>
        </div>
        <h3 className="flex h-[34px] items-center pl-[3px] pt-2">Vues définies par l'utilisateur :</h3>
        <div className="h-[305px] border border-[#80848c] bg-[#fbfaf2]" />
        <div className="flex gap-[5px] pb-[7px] pl-[2px] pr-[3px] pt-[2px]">
          <ToolButton name="eyeNew" />
          <span className="w-0" />
          <ToolButton name="eyeList" kind="off" />
          <ToolButton name="eyeBack" kind="off" />
          <span className="flex-1" />
          <ToolButton name="eyeDel" kind="off" />
          <ToolButton name="del" kind="off" />
        </div>
      </div>

      <section className="-mx-px flex min-h-0 flex-1 flex-col border-[3px] border-[#eb4b43]">
        <h3 className="h-[18px] bg-[#d9e5fd] pl-px leading-[18px] text-[#10108c]">Visibilités</h3>
        <div className="flex gap-[5px] pl-[2px] pt-[3px]">
          <ToolButton name="sGrey" kind="off" />
          <ToolButton name="sGreyX" kind="off" />
          <ToolButton name="sRed" />
          <ToolButton name="sNum" />
          <span className="w-0" />
          <ToolButton name="sBack" />
          <ToolButton name="sGreyGo" kind="off" />
          <span className="w-0" />
          <ToolButton name="sCross" />
        </div>
        <div className="flex items-center gap-[3px] pb-[5px] pl-[2px] pt-[12px]">
          <CheckBox id="vis" state="on" />
          <label htmlFor="vis" className="leading-4">Visibilités :</label>
        </div>
        <div className="min-h-0 flex-1 overflow-hidden border-y border-[#80848c] bg-[#fbfaf2] pt-px">
          {rowsTop.map((r) => <TreeRow key={r.label} row={r} />)}
          <div className="relative">
            {rowsMaterial.map((r) => <TreeRow key={r.label} row={r} />)}
            <span className="pointer-events-none absolute -bottom-px left-[21px] top-0 w-[174px] border-[3px] border-[#eb4b43]" />
          </div>
          {rowsRest.map((r) => <TreeRow key={r.label} row={r} />)}
        </div>
        <div className="flex gap-[5px] pb-[5px] pl-[2px] pt-1">
          <ToolButton name="sNew" />
          <span className="w-0" />
          <ToolButton name="sPlusG" kind="off" />
          <ToolButton name="sMinusG" kind="off" />
          <ToolButton name="sEqG" kind="off" />
          <span className="w-0" />
          <ToolButton name="sBall" />
          <span className="w-0" />
          <ToolButton name="ghost" kind="on" />
          <ToolButton name="ghost" kind="off" />
          <ToolButton name="ghost" kind="off" />
        </div>
      </section>

      <div className="flex items-center gap-[3px] pl-1 pt-1 font-['Open_Sans',sans-serif] text-[#8a8a8a]">
        <CheckBox id="ajout" small />
        <label htmlFor="ajout" className="leading-4">Ajouter de nouveaux objets dans la visibilité :</label>
      </div>
      <div className="grid items-center px-1 pb-1 pt-[2px] [&>*]:col-start-1 [&>*]:row-start-1">
        <select aria-label="Visibilité" disabled className="h-[22px] w-full appearance-none border border-[#c0c0c0] bg-[#cccccc]" />
        <svg viewBox="0 0 10 6" className="mr-1.5 h-1.5 w-2.5 justify-self-end"><path d="M1 1l4 4 4-4" fill="none" stroke="#9c9c9c" /></svg>
      </div>
    </div>

    <nav className="mt-1 flex h-[24px] items-center bg-[#d0d4de] font-['Open_Sans',sans-serif] text-[11px] text-[#4a4d52]">
      <button className="flex items-center gap-[2px] pl-[5px]"><Icon name="tabData" />Données</button>
      <button className="flex items-center gap-[3px] pl-[10px]"><Icon name="tabShow" />Affiche</button>
      <span className="relative ml-[13px]">
        <button className="flex h-5 w-[52px] items-center gap-[2px] rounded-b border-x-2 border-b-2 border-[#f3d68a] bg-[#eef1f8] pl-[3px]">
          <Icon name="tabView" />Vues
        </button>
        <span className="pointer-events-none absolute -left-[11px] -right-[10px] -top-[5px] bottom-[-5px] z-10 border-[3px] border-[#eb4b43]" />
      </span>
    </nav>
  </aside>
);

const Pin = () => (
  <svg viewBox="0 0 9 9" className="h-[9px] w-[9px]">
    <path d="M2.500.5h4v4h-4zM1 5h7M4.500 5v4M5.500 1v4" fill="none" stroke="#666a72" />
  </svg>
);

const Cross = () => (
  <svg viewBox="0 0 9 9" className="h-[9px] w-[9px]">
    <path d="M.5.5l8 8M8.500.5l-8 8" fill="none" stroke="#666a72" />
  </svg>
);

/* ---------- 3D view ---------- */

// x, top, width, height
const backColumns = [[926, 473, 20, 113], [857, 465, 19, 147], [1194, 540, 18, 113], [791, 560, 9, 8], [1273, 615, 8, 13]];
const lowColumns = [[632, 557, 15, 68], [776, 567, 15, 76], [1113, 600, 15, 84], [1257, 624, 16, 79], [1409, 574, 15, 71]];
const midColumns = [[632, 474, 15, 70], [776, 484, 15, 78], [1113, 533, 15, 70], [1194, 545, 18, 28], [1257, 543, 16, 79], [1409, 495, 15, 70]];
const topColumns = [[857, 370, 19, 80], [1194, 411, 18, 81], [1262, 386, 20, 79]];

const Columns = ({ list, fill }: { list: number[][]; fill: string }) => (
  <g fill={fill}>
    {list.map(([x, y, w, h]) => <rect key={`${x}-${y}`} x={x} y={y} width={w} height={h} />)}
  </g>
);

const bases = [[630, 624, 19], [774, 642, 19], [791, 567, 9], [857, 611, 19], [926, 585, 19], [1111, 683, 19], [1194, 652, 18], [1255, 702, 20], [1273, 627, 8], [1407, 644, 19]];

const slab = (dy: number) =>
  `M614 ${459 + dy}L781 ${396 + dy}L1454 ${480 + dy}L1289 ${542 + dy}C1240 ${549 + dy} 1190 ${547 + dy} 1150 ${540 + dy}C1115 ${535 + dy} 1097 ${528 + dy} 1096 ${518 + dy}L1165 ${492 + dy}L877 ${457 + dy}L809 ${483 + dy}C760 ${489 + dy} 710 ${488 + dy} 667 ${482 + dy}C640 ${478 + dy} 617 ${470 + dy} 614 ${459 + dy}z`;

const steps = (x: number, y: number, n: number) => Array.from({ length: n }, (_, i) => [x + i * 48, y + i * 6]);
const backTop = steps(842, 469.5, 7);
const backLow = steps(890, 502.5, 5);
const frontTop = steps(808, 482.5, 7);
const frontLow = steps(856, 515.5, 5);

const Chord = ({ from, to }: { from: number[]; to: number[] }) => {
  const d = `M${from[0]} ${from[1]}L${to[0]} ${to[1]}`;
  return (
    <g>
      <path d={d} stroke="#2c2c66" strokeWidth="7.500" strokeDasharray="1.200 .8" />
      <path d={d} stroke="#7373fb" strokeWidth="5.500" />
    </g>
  );
};

const Truss = ({ top, low }: { top: number[][]; low: number[][] }) => (
  <g>
    <path
      d={`M${top[0]}L${low[0]}M${top[1]}L${low[1]}L${top[3]}L${low[3]}L${top[5]}M${low[4]}L${top[6]}${low.map((p, i) => `M${top[i + 1]}L${p}`).join('')}`}
      stroke="#7373fb"
      strokeWidth="3.500"
      fill="none"
    />
    <Chord from={top[0]} to={top[6]} />
    <Chord from={low[0]} to={low[4]} />
    {[...top, ...low].map(([x, y], i) => <Dot key={i} x={x} y={y} c="#9c1238" s={3} />)}
  </g>
);

const Structure = () => (
  <svg viewBox="403 101 1517 786" className="h-full w-full" role="img" aria-label="Modèle 3D">
    {/* lower floor */}
    <Columns list={backColumns} fill="#cbcbcb" />
    <path d="M857 546L877 538L1165 573L1130 582L876 549z" fill="#cecece" />
    <path d={slab(81)} fill="#c3c3c3" />
    <path d="M990 544l17-7 105 8-29 11z" fill="#fff" />
    <Columns list={[[857, 466, 19, 72], [926, 490, 20, 37]]} fill="#c9c9c9" />
    <Columns list={lowColumns} fill="#cbcbcb" />
    <Columns list={midColumns} fill="#cacaca" />
    {/* middle floor */}
    <path d="M855 465L875 457L1158 492L1137 501L1040 489L875 468z" fill="#cdcdcd" />
    <path d="M1082 527l31 5v14l-28-6z" fill="#cdcdcd" />
    <path d={slab(0)} fill="#c3c3c3" />
    <path d="M877 452L973 419M877 452L1165 488L1290 458" stroke="#bcbcbc" strokeWidth=".8" fill="none" />
    {/* roof */}
    <rect x="926" y="385" width="21" height="39" fill="#cacaca" />
    <path d="M857 370L1210 412L1194 426L876 387z" fill="#cccccc" />
    <path d="M1245 399l46-18-29 19z" fill="#cccccc" />
    <Columns list={topColumns} fill="#cbcbcb" />
    <path d="M930 336.500L845 368.500L1210 412L1291 381.700z" fill="#c3c3c3" />
    <path d="M848 368.500L1206 411" stroke="#b5b5b5" strokeWidth=".8" />
    {bases.map(([x, y, w], i) => <path key={i} d={`M${x} ${y}h${w}v3l-${w / 3} 2l-${(w * 2) / 3} -1z`} fill="#b7d6b5" />)}
    {[[930, 336], [845, 368], [1291, 382], [781, 396], [614, 459], [1454, 480], [614, 540], [1454, 561], [973, 419], [1096, 599]].map(([x, y], i) => (
      <Dot key={i} x={x} y={y} c="#b3aaaa" s={2} />
    ))}

    <Truss top={backTop} low={backLow} />
    <Truss top={frontTop} low={frontLow} />

    {/* local and global axis systems */}
    <AxisCross x={781} y={478} r={[29, 3.5]} g={[-18, 6]} b={32} />
    <AxisCross x={458} y={768} r={[35, 4]} g={[-20, 8]} b={38} />
  </svg>
);

const AxisCross = ({ x, y, r, g, b }: { x: number; y: number; r: number[]; g: number[]; b: number }) => (
  <g transform={`translate(${x} ${y})`} fontSize="9" fontFamily="Liberation Sans, sans-serif" textAnchor="middle">
    <path d={`M0 0L${r}`} stroke="#f00000" strokeWidth="1.700" />
    <path d={`M${r[0]} ${r[1]}l-7 -4v6z`} fill="#b00000" />
    <path d={`M0 0L${g}`} stroke="#4be000" strokeWidth="1.700" />
    <path d={`M${g[0]} ${g[1]}l5 -4l2 5z`} fill="#1f9a10" />
    <path d={`M0 0V${b}`} stroke="#1010e8" strokeWidth="1.700" />
    <path d={`M-2.500 ${b - 8}h5L0 ${b + 1}z`} fill="#0808a8" />
    <text x={r[0] + 8} y={r[1] + 5} fill="#f02020">X</text>
    <text x={g[0] - 5} y={g[1] + 5} fill="#4be000" fontStyle="italic">Y</text>
    <text x="0" y={b + 12} fill="#1010e8">Z</text>
  </g>
);

/* ---------- table ---------- */

const nodes = [
  ['0.000', '0.000', '0.000'],
  ['6.000', '0.000', '0.000'],
  ['0.000', '3.000', '0.000'],
  ['6.000', '3.000', '0.000'],
  ['0.000', '0.000', '2.800'],
  ['6.000', '0.000', '2.800'],
];

const tabs: [string, string][] = [
  ['Nœuds', 'w-[45px]'], ['Lignes', 'w-[41px]'], ['Matériaux', 'w-[56px]'], ['Surfaces', 'w-[52px]'], ['Solides', 'w-[44px]'],
  ['Ouvertures', 'w-[62px]'], ['Appuis nodaux', 'w-[79px]'], ['Appuis linéiques', 'w-[87px]'], ['Appuis de surface', 'w-[95px]'],
  ['Articulations linéiques', 'w-[110px]'], ['Sections', 'w-[52px]'], ['Articulations de barre', 'w-[109px]'],
  ['Excentrement de barre', 'w-[117px]'], ['Divisions de barre', 'w-[94px]'], ['Barres', 'w-[40px]'], ['Nervures', 'w-[53px]'],
  ['Fondations élastiques de barre', 'w-[154px]'], ['Non-linéarités de barre', 'w-[116px]'],
];

const th = 'border-b-2 border-r border-[#6b6b6b] bg-[#e1e1e1] font-normal leading-3';
const sub = 'border-b border-r border-[#8c8c8c] bg-[#f0f0f0] font-normal';
const td = 'border-b border-r border-[#8c8c8c] bg-white';

const NodeTable = () => (
  <table className="min-w-0 flex-1 table-fixed border-separate border-spacing-0 border-l border-t border-[#6b6b6b] text-[11px] leading-[15px]">
    <colgroup>
      <col className="w-[46px]" /><col className="w-[84px]" /><col className="w-[72px]" /><col className="w-[90px]" />
      <col className="w-[78px]" /><col className="w-[78px]" /><col className="w-[78px]" /><col />
    </colgroup>
    <thead>
      <tr className="h-[14px]">
        <th rowSpan={3} className="border-b border-r border-[#6b6b6b] bg-[#e1e1e1] font-normal">Nœud<br />n°</th>
        <th className={`${th} !bg-[#0078d7] text-white`}>A</th>
        {['B', 'C', 'D', 'E', 'F', 'G'].map((c) => <th key={c} className={th}>{c}</th>)}
      </tr>
      <tr className="h-4">
        <th rowSpan={2} className={`${sub} align-bottom`}>Type de nœud</th>
        <th rowSpan={2} className={sub}>Nœud de<br />référence</th>
        <th rowSpan={2} className={sub}>Système de<br />coordonnées</th>
        <th colSpan={3} className="border-r border-[#8c8c8c] bg-[#f0f0f0] font-normal">Coordonnées du nœud</th>
        <th rowSpan={2} className={`${sub} align-bottom`}>Commentaire</th>
      </tr>
      <tr className="h-4">
        <th className={sub}>X [m]</th>
        <th className={sub}>Y [m]</th>
        <th className={sub}>Z [m]</th>
      </tr>
    </thead>
    <tbody>
      {nodes.map((n, i) => (
        <tr key={i} className="h-4">
          <th className={`border-b-2 border-r border-[#6b6b6b] font-normal leading-3 ${i === 0 ? 'bg-[#0078d7] text-white' : 'bg-[#e1e1e1]'}`}>{i + 1}</th>
          <td className={`${td} pl-1 ${i === 0 ? 'outline-1 -outline-offset-1 outline-dotted outline-black' : ''}`}>Standard</td>
          <td className={`${td} text-center`}>0</td>
          <td className={`${td} pl-1`}><span className="underline">C</span>artésien</td>
          {n.map((v, j) => <td key={j} className={`${td} pr-1 text-right`}>{v}</td>)}
          <td className={td} />
        </tr>
      ))}
    </tbody>
  </table>
);

const TablePanel = () => (
  <section className="flex flex-col bg-[#f0f0f0]">
    <div className="flex h-[19px] items-center bg-[#b9c0ca] pl-1 pr-1 font-['Open_Sans',sans-serif] text-[11px] text-[#3c3f45]">
      <h2>1.1 Nœuds</h2>
      <button aria-label="Épingler" className="ml-auto mr-2"><Pin /></button>
      <button aria-label="Fermer"><Cross /></button>
    </div>
    <div className="flex h-[26px] items-center border-b-2 border-[#6b6e75] bg-gradient-to-b from-[#e8edf8] to-[#d3d9e3] pl-[9px]">
      <Tools items="tEdit* tPlus tDown tDiag tWave | tLeft tRight | tFrom* tTo* tSync | tAdd tSwap tSplit | tX | rowDel rowIn rowOut | tYellow tBlue | tPencil | handSheet glasses excel calc | ab fx fxDel | lock" />
    </div>
    <div className="flex pl-[2px] pr-1 pt-[2px]">
      <NodeTable />
      <div className="flex w-4 flex-col items-center bg-[#f0f0f0]">
        <svg viewBox="0 0 8 5" className="my-1.5 h-[5px] w-2"><path d="M.5 4.500L4 1l3.500 3.500" fill="none" stroke="#444" strokeWidth="1.500" /></svg>
        <span className="h-[17px] w-3.5 bg-[#cdcdcd]" />
        <svg viewBox="0 0 8 5" className="mb-1 mt-auto h-[5px] w-2"><path d="M.5 .5L4 4 7.500.5" fill="none" stroke="#444" strokeWidth="1.500" /></svg>
      </div>
    </div>
    <div className="mt-[20px] flex h-[18px] border-t border-[#6b6b6b]">
      {tabs.map(([label, w], i) => (
        <button
          key={label}
          className={`h-[17px] shrink-0 whitespace-nowrap rounded-b border-b border-r border-[#555] text-center text-[10px] leading-4 ${w} ${i === 0 ? 'bg-[#f7f7f7]' : 'bg-[#e6e6e6]'}`}
        >
          {label}
        </button>
      ))}
      <div className="ml-auto flex">
        {['M4 3v6M11 3v6L6 6z', 'M9 3v6L4 6z', 'M5 3v6l5-3z', 'M10 3v6M3 3v6l5-3z'].map((d, i) => (
          <button key={d} aria-label={`Défiler ${i + 1}`} className="h-4 w-4 border border-b-[#555] border-l-white border-r-[#555] border-t-white bg-[#f0f0f0]">
            <svg viewBox="0 0 14 12" className="h-3 w-3.5"><path d={d} fill={i < 2 ? '#aaa' : '#000'} stroke={i < 2 ? '#aaa' : '#000'} /></svg>
          </button>
        ))}
      </div>
    </div>
    <div className="h-[18px]" />
  </section>
);

/* ---------- status bar ---------- */

const toggles: [string, string][] = [
  ['SAISIE', 'w-[38px]'], ['GRILLE', 'w-[43px]'], ['CARTES', 'w-[56px]'], ["SAISIE D'OB.", 'w-[72px]'], ['GLIGNES', 'w-[52px]'], ['DXF', 'w-[27px]'],
];

const StatusBar = () => (
  <footer className="flex h-[21px] shrink-0 items-center border-t border-[#8e95a0] bg-gradient-to-b from-[#bfc4cd] via-[#a6adb9] to-[#c4c9d1] text-[11px] text-[#1e2126]">
    <span className="pl-1">Plan de travail</span>
    <div className="ml-auto flex items-center gap-[2px]">
      {toggles.map(([label, w]) => (
        <button
          key={label}
          className={`h-[18px] whitespace-nowrap border text-[11px] leading-4 ${w} ${label === 'GRILLE' ? 'border-b-[#777] border-l-white border-r-[#777] border-t-white' : 'border-b-white border-l-black border-r-white border-t-black'}`}
        >
          {label}
        </button>
      ))}
    </div>
    <span className="ml-[2px] w-[100px] border-l border-[#dfe2e7] pl-[2px]">Mode de visibilité</span>
    <span className="w-[89px] pl-[2px]">SC : Global XYZ</span>
    <span className="w-[89px] border-l border-[#dfe2e7] pl-[2px]">Plan: XY</span>
    <span className="flex w-[73px] gap-1.5 border-l border-[#dfe2e7] pl-[2px]"><span>X:</span>17.841 m</span>
    <span className="flex w-[74px] gap-1.5 border-l border-[#dfe2e7] pl-[2px]"><span>Y:</span>-0.841 m</span>
    <span className="flex w-[91px] gap-1.5 border-l border-[#dfe2e7] pl-[2px]"><span>Z:</span>0.000 m</span>
  </footer>
);

const App = () => {
  const [loadCase, setLoadCase] = useState('CC2 - Neige');

  return (
    <div className="flex h-screen min-h-[700px] flex-col overflow-hidden bg-[#d0d4de] font-['Liberation_Sans',sans-serif] text-[11px] text-black">
      {/* Title bar */}
      <header className="flex h-[23px] shrink-0 items-center bg-[#0078d7] pl-[2px] pr-[3px] font-['Open_Sans',sans-serif] text-[11px] text-white">
        <svg viewBox="0 0 16 16" className="h-4 w-4">
          <path d="M5 4l4-3 6 3v7l-5 4-5-3z" fill="#7d8894" stroke="#323a44" strokeWidth=".8" />
          <path d="M5 4l5 3 5-3M10 7v8" stroke="#c6ced6" strokeWidth=".8" fill="none" />
          <text x="0" y="15" fontSize="11" fontWeight="bold" fontFamily="Liberation Sans, sans-serif" fill="#ffc52e">5</text>
        </svg>
        <h1 className="pl-1.5">RFEM 5.22.01 x64 - [RFEM-Exemple-04*]</h1>
        <div className="ml-auto flex">
          <button aria-label="Réduire" className="flex w-[46px] justify-center"><svg viewBox="0 0 11 11" className="h-[11px] w-[11px]"><path d="M0 5.500h11" stroke="#fff" /></svg></button>
          <button aria-label="Restaurer" className="flex w-[46px] justify-center"><svg viewBox="0 0 11 11" className="h-[11px] w-[11px]"><path d="M.5 2.500h8v8h-8zM2.500 2.500v-2h8v8h-2" stroke="#fff" fill="none" /></svg></button>
          <button aria-label="Quitter" className="flex w-[46px] justify-center"><svg viewBox="0 0 11 11" className="h-[11px] w-[11px]"><path d="M.5.5l10 10M10.500.5l-10 10" stroke="#fff" /></svg></button>
        </div>
      </header>

      {/* Menu bar */}
      <nav className="flex h-6 shrink-0 items-center font-['Open_Sans',sans-serif] text-[11px] text-[#45484e]">
        <span className="mx-[4px] h-[15px] border-l-2 border-dotted border-[#f4f6fa]" />
        <svg viewBox="0 0 17 13" className="h-[13px] w-[17px]">
          <rect width="17" height="13" fill="#12265c" />
          <path d="M0 8.500h17M6.500 1v11M8.500 1v11M0 8C4 7 6 3 6.500 1M8.500 1C9 3 12 7 17 8M3 7v2M12 6v3" stroke="#fff" fill="none" />
        </svg>
        <ul className="flex gap-4 pl-[9px]">
          {menus.map((m) => (
            <li key={m}><button><MenuLabel text={m} /></button></li>
          ))}
        </ul>
        <div className="ml-auto flex items-center gap-1.5 pr-[5px] pt-1">
          <svg viewBox="0 0 8 10" className="h-2.5 w-2"><path d="M0 8h7" stroke="#666a72" strokeWidth="2" /></svg>
          <svg viewBox="0 0 10 10" className="h-2.5 w-2.5"><path d="M.5 3.500h7v5h-7zM2 1.500h7.500v6" stroke="#777b83" strokeWidth="1.300" fill="none" /></svg>
          <svg viewBox="0 0 9 9" className="h-[9px] w-[9px]"><path d="M1 1l7 7M8 1L1 8" stroke="#777b83" strokeWidth="2" /></svg>
        </div>
      </nav>

      {/* Toolbars */}
      <div className="flex shrink-0 flex-col items-start gap-px pb-px">
        <div className={`${bar} pr-[3px]`}>
          <span className="mx-1 h-[17px] w-[2px] border-l-2 border-dotted border-[#9aa0ab]" />
          <Tools items="new open blocks blocksBlue save clipboard print preview | undo redo | cursorRect cursorCircle cursorRing cursorPlus yellowWin | listPage* tablePage* | loadCase" />
          <div className="mx-[2px] grid h-[19px] w-[216px] items-center bg-white [&>*]:col-start-1 [&>*]:row-start-1">
            <select
              aria-label="Cas de charge"
              value={loadCase}
              onChange={(e) => setLoadCase(e.target.value)}
              className="h-full w-full appearance-none border border-white bg-transparent pl-[2px] font-['Open_Sans',sans-serif] text-[11px]"
            >
              <option>CC1 - Poids propre</option>
              <option>CC2 - Neige</option>
            </select>
            <span className="pointer-events-none flex h-[17px] w-[15px] items-center justify-center justify-self-end bg-[#dfe4ed]">
              <svg viewBox="0 0 6 4" className="h-1 w-1.5"><path d="M0 0h6L3 4z" fill="#6b7078" /></svg>
            </span>
          </div>
          <Tools items="prev next eyeLoad xxLoad eyeResult xxResult | glasses abacusWin abacus : handGrid gridSnap planeA* planeB planeC guides axisWin | moveCopy rotate mirror cross info gearBox gears : modDown modUp redDown redUp" />
        </div>
        <div className={bar}>
          <span className="mx-1 h-[17px] w-[2px] border-l-2 border-dotted border-[#9aa0ab]" />
          <Tools items="node v line member v polyline v | support lineSupport surfSupport | dim v comment guideFrame | surface v opening v intersect v solid solidNew v | release v nodeLoad lineLoad memberLoad surfLoad solidLoad v : hand zoomWin zoomDel cube cubes | vX vY vZ vmX v scopeYellow v | shape v : deform capsule | iDiag rainbow rainbowCube reactions sectionRes fourBlocks v iWave cells | panel tapeStar v cancelBox v" />
        </div>
      </div>

      <main className="flex min-h-0 flex-1">
        <Navigator />
        <div className="flex min-w-0 flex-1 flex-col pl-1">
          <div className="grid min-h-0 flex-1 border-l-2 border-t-2 border-[#6b6e75] bg-white [&>*]:col-start-1 [&>*]:row-start-1">
            <Structure />
            <p className="self-start pl-1 pt-[5px] leading-[14px]">Mode de visibilité - Généré</p>
          </div>
          <div className="h-[6px] shrink-0" />
          <TablePanel />
        </div>
      </main>

      <StatusBar />
    </div>
  );
};

export default App;
